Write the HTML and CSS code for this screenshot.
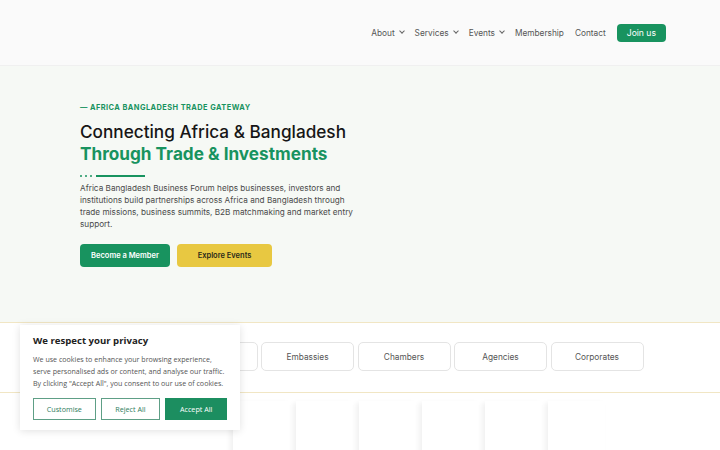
FILE: index.html
```html
<!DOCTYPE html>
<html lang="en">
<head>
    <meta charset="UTF-8">
    <meta name="viewport" content="width=device-width, initial-scale=1.0">
    <title>Africa Bangladesh Business Forum</title>
    <link rel="stylesheet" href="styles.css">
</head>
<body>
    <header class="site-header">
        <nav class="main-nav">
            <a href="#" class="nav-link">About <span class="chev"></span></a>
            <a href="#" class="nav-link">Services <span class="chev"></span></a>
            <a href="#" class="nav-link">Events <span class="chev"></span></a>
            <a href="#" class="nav-link">Membership</a>
            <a href="#" class="nav-link">Contact</a>
            <a href="#" class="join-btn">Join us</a>
        </nav>
    </header>

    <section class="hero">
        <p class="eyebrow">— Africa Bangladesh Trade Gateway</p>
        <h1 class="hero-title">Connecting Africa &amp; Bangladesh<br><span class="accent">Through Trade &amp; Investments</span></h1>
        <div class="divider">
            <span class="dot"></span><span class="dot"></span><span class="dot"></span>
            <span class="bar"></span>
        </div>
        <p class="hero-text">Africa Bangladesh Business Forum helps businesses, investors and institutions build partnerships across Africa and Bangladesh through trade missions, business summits, B2B matchmaking and market entry support.</p>
        <div class="hero-actions">
            <a href="#" class="btn btn-green">Become a Member</a>
            <a href="#" class="btn btn-yellow">Explore Events</a>
        </div>
    </section>

    <section class="audience">
        <div class="pill-row">
            <!-- first two sit under the cookie notice -->
            <div class="pill"></div>
            <div class="pill"></div>
            <div class="pill">Embassies</div>
            <div class="pill">Chambers</div>
            <div class="pill">Agencies</div>
            <div class="pill">Corporates</div>
        </div>
    </section>

    <section class="partners">
        <div class="card-row">
            <div class="card"></div>
            <div class="card"></div>
            <div class="card"></div>
            <div class="card"></div>
            <div class="card"></div>
            <div class="card"></div>
        </div>
    </section>

    <div class="cookie-box">
        <h3>We respect your privacy</h3>
        <p>We use cookies to enhance your browsing experience, serve personalised ads or content, and analyse our traffic. By clicking "Accept All", you consent to our use of cookies.</p>
        <div class="cookie-actions">
            <button class="cookie-btn">Customise</button>
            <button class="cookie-btn">Reject All</button>
            <button class="cookie-btn accept">Accept All</button>
        </div>
    </div>
</body>
</html>
```

FILE: styles.css
```css
body {
    font-family: 'Inter', 'Noto Sans', sans-serif;
    margin: 0;
    padding: 0;
    background-color: #ffffff;
    color: #1c1c1c;
    overflow: hidden;
    height: 450px;
}

a {
    text-decoration: none;
}

.site-header {
    height: 66px;
    background-color: #fafafa;
    border-bottom: 1px solid #f0f0f0;
    box-sizing: border-box;
    display: flex;
    justify-content: flex-end;
    align-items: center;
    padding-right: 54px;
}

.main-nav {
    display: flex;
    align-items: center;
    gap: 11px;
}

.nav-link {
    color: #555;
    font-size: 8.3px;
    display: flex;
    align-items: center;
    gap: 4px;
}

.chev {
    width: 3px;
    height: 3px;
    border-right: 1px solid #666;
    border-bottom: 1px solid #666;
    transform: rotate(45deg);
    margin-top: -3px;
    margin-left: 1px;
}

.join-btn {
    background-color: #18935f;
    color: #fff;
    font-size: 8.6px;
    font-weight: 400;
    height: 18px;
    line-height: 18px;
    padding: 0 10px;
    border-radius: 4px;
}

.hero {
    background-color: #f6f9f5;
    height: 257px;
    box-sizing: border-box;
    padding: 37px 0 0 80px;
    border-bottom: 1px solid #f1e6c4;
}

.eyebrow {
    margin: 0;
    font-size: 7.4px;
    font-weight: 700;
    line-height: 10px;
    letter-spacing: 0.45px;
    text-transform: uppercase;
    color: #18935f;
}

.hero-title {
    margin: 8px 0 0;
    font-size: 17.2px;
    font-weight: 500;
    line-height: 22px;
    color: #161616;
}

.hero-title .accent {
    color: #18935f;
    font-weight: 700;
}

.divider {
    display: flex;
    align-items: center;
    gap: 2px;
    margin-top: 10px;
    height: 2px;
}

.divider .dot {
    width: 2px;
    height: 2px;
    border-radius: 1px;
    background-color: #18935f;
    margin-right: 1px;
}

.divider .bar {
    width: 49px;
    height: 2px;
    background-color: #18935f;
    margin-left: 1px;
}

.hero-text {
    margin: 5px 0 0;
    max-width: 276px;
    font-size: 8.2px;
    line-height: 12px;
    color: #4a4a4a;
}

.hero-actions {
    display: flex;
    gap: 7px;
    margin-top: 14px;
}

.btn {
    height: 23px;
    line-height: 23px;
    border-radius: 4px;
    font-size: 7.5px;
    font-weight: 600;
    text-align: center;
}

.btn-green {
    width: 90px;
    background-color: #18935f;
    color: #fff;
}

.btn-yellow {
    width: 95px;
    background-color: #e8c841;
    color: #2a2a1a;
}

.audience {
    height: 70px;
    box-sizing: border-box;
    padding: 19px 0 0 68px;
    border-bottom: 1px solid #f1e6c4;
}

.pill-row {
    display: flex;
    gap: 3.5px;
}

.pill {
    width: 93px;
    height: 29px;
    box-sizing: border-box;
    border: 1px solid #e4e4e4;
    border-radius: 5px;
    display: flex;
    align-items: center;
    justify-content: center;
    font-size: 8.3px;
    color: #555;
}

.partners {
    padding: 8px 0 0 233px;
}

.card-row {
    display: flex;
    gap: 6px;
}

.card {
    width: 57px;
    height: 80px;
    background-color: #fff;
    box-shadow: -3px 2px 5px rgba(0, 0, 0, 0.06);
}

.cookie-box {
    position: absolute;
    left: 20px;
    top: 325px;
    width: 220px;
    height: 105px;
    box-sizing: border-box;
    padding: 10px 13px 0;
    background-color: #fff;
    box-shadow: 0 1px 8px rgba(0, 0, 0, 0.12);
    font-family: 'Open Sans', 'Noto Sans', sans-serif;
}

.cookie-box h3 {
    margin: 0;
    font-size: 9.6px;
    font-weight: 700;
    line-height: 12px;
    color: #222;
}

.cookie-box p {
    margin: 6px 0 0;
    font-size: 7.1px;
    line-height: 12px;
    color: #555;
}

.cookie-actions {
    display: flex;
    gap: 5px;
    margin-top: 9px;
}

.cookie-btn {
    height: 22px;
    box-sizing: border-box;
    border: 1.5px solid #5e9f86;
    background-color: #fff;
    color: #2f7d60;
    font-family: 'Open Sans', 'Noto Sans', sans-serif;
    font-size: 7.2px;
    padding: 0;
    width: 63px;
}

.cookie-btn:nth-child(2) {
    width: 60px;
}

.cookie-btn.accept {
    width: 62px;
    background-color: #1c8e60;
    border-color: #1c8e60;
    color: #fff;
}
```
